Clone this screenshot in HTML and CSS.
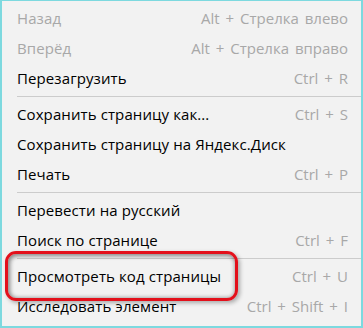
FILE: index.html
```html
<!DOCTYPE html>
<html lang="ru">
<head>
<meta charset="utf-8">
<link rel="stylesheet" href="styles.css">
</head>
<body>
<div class="menu">
  <div class="item disabled"><span class="label">Назад</span><span class="key">Alt + Стрелка влево</span></div>
  <div class="item disabled"><span class="label">Вперёд</span><span class="key">Alt + Стрелка вправо</span></div>
  <div class="item"><span class="label">Перезагрузить</span><span class="key">Ctrl + R</span></div>
  <div class="sep"></div>
  <div class="item"><span class="label">Сохранить страницу как...</span><span class="key">Ctrl + S</span></div>
  <div class="item"><span class="label">Сохранить страницу на Яндекс.Диск</span></div>
  <div class="item"><span class="label">Печать</span><span class="key">Ctrl + P</span></div>
  <div class="sep"></div>
  <div class="item"><span class="label">Перевести на русский</span></div>
  <div class="item"><span class="label">Поиск по странице</span><span class="key">Ctrl + F</span></div>
  <div class="sep"></div>
  <div class="item marked"><span class="label">Просмотреть код страницы</span><span class="key">Ctrl + U</span><span class="highlight"></span></div>
  <div class="item"><span class="label">Исследовать элемент</span><span class="key">Ctrl + Shift + I</span></div>
</div>
</body>
</html>
```
FILE: styles.css
```css
html, body {
  margin: 0;
  padding: 0;
  background: #f2f2f2;
}
.menu {
  position: relative;
  width: 363px;
  height: 328px;
  box-sizing: border-box;
  border-style: solid;
  border-color: #7dd9df;
  border-width: 1px 2px 2px 2px;
  background: #f2f2f2;
  padding: 2px 0 5px 0;
  font-family: "Open Sans", "Noto Sans", sans-serif;
  font-size: 15px;
  color: #000;
}
.item {
  position: relative;
  display: flex;
  justify-content: space-between;
  align-items: center;
  height: 30px;
  padding: 0 13px 0 15px;
  line-height: 30px;
  white-space: nowrap;
}
.label {
  letter-spacing: 0.1px;
}
.item.disabled .label {
  color: #a8a8a8;
}
.key {
  color: #a8a8a8;
  word-spacing: 2px;
}
.sep {
  height: 6px;
  margin-left: 15px;
  position: relative;
}
.sep::after {
  content: "";
  display: block;
  position: absolute;
  left: 0;
  right: 0;
  top: 3px;
  height: 1px;
  background: #cccccc;
}
.highlight {
  position: absolute;
  left: 3px;
  top: -10px;
  width: 233px;
  height: 50px;
  box-sizing: border-box;
  border: 3px solid #e3101b;
  border-radius: 11px;
  box-shadow: inset 1px 1px 4px 1px rgba(0,0,0,0.45), 2px 2px 4px rgba(0,0,0,0.3);
}
```
